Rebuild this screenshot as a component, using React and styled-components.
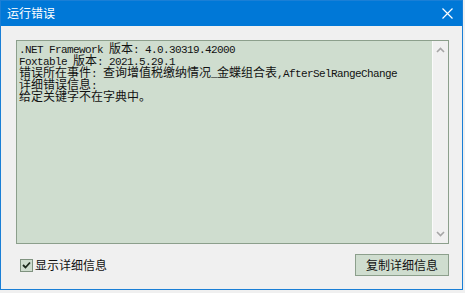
import React from 'react'
import styled, { createGlobalStyle } from 'styled-components'

const GlobalStyle = createGlobalStyle`
  html, body {
    margin: 0;
    padding: 0;
    background: #f0f0f0;
  }
  * {
    box-sizing: border-box;
  }
`

const Window = styled.div`
  width: 463px;
  height: 290px;
  border: 1px solid #1a7fd6;
  background: #f0f0f0;
  display: flex;
  flex-direction: column;
  font-family: "Noto Sans CJK SC", "Liberation Sans", sans-serif;
  font-size: 12px;
  color: #111;
`

const TitleBar = styled.div`
  height: 25px;
  background: #0078d7;
  color: #fff;
  display: flex;
  align-items: center;
  padding: 0 9px 1px 6px;
  font-size: 12px;
  line-height: 12px;
`

const Close = styled.svg`
  margin-left: auto;
  width: 11px;
  height: 11px;
`

const Body = styled.div`
  flex: 1;
  display: flex;
  flex-direction: column;
  padding: 14px 13px 0 15px;
`

const TextBox = styled.div`
  height: 204px;
  border: 1px solid #8c9f8c;
  background: #cfddcf;
  display: flex;
`

const Lines = styled.div`
  flex: 1;
  padding: 1px 2px;
  line-height: 12px;
  white-space: pre;
  font-size: 12px;
  color: #121212;
`

const Line = styled.div`
  height: 12px;
  line-height: 12px;
`

const Ascii = styled.span`
  font-family: "Liberation Mono", monospace;
  font-size: 11px;
  line-height: 12px;
  letter-spacing: -0.6px;
`

const ScrollBar = styled.div`
  width: 16px;
  background: #f0f0f0;
  border-left: 1px solid #fafafa;
  display: flex;
  flex-direction: column;
  justify-content: space-between;
  align-items: center;
  padding: 6px 0 6px;
`

const Arrow = styled.svg`
  width: 9px;
  height: 6px;
  transform: ${p => (p.$down ? 'rotate(180deg)' : 'none')};
`

const Footer = styled.div`
  margin-top: 10px;
  height: 22px;
  display: flex;
  align-items: center;
  justify-content: space-between;
`

const CheckLabel = styled.label`
  display: flex;
  align-items: center;
  gap: 2px;
  padding-left: 4px;
  line-height: 12px;
  font-size: 12px;
`

const CheckBox = styled.span`
  width: 13px;
  height: 13px;
  border: 1px solid #7f927f;
  background: #cfddcf;
  display: flex;
  align-items: center;
  justify-content: center;
`

const Button = styled.button`
  width: 94px;
  height: 22px;
  border: 1px solid #8c9f8c;
  background: #cfddcf;
  font-family: inherit;
  font-size: 12px;
  color: #111;
  padding: 0;
  line-height: 12px;
`

const lines = [
  '.NET Framework 版本: 4.0.30319.42000',
  'Foxtable 版本: 2021.5.29.1',
  '错误所在事件: 查询增值税缴纳情况_金蝶组合表,AfterSelRangeChange',
  '详细错误信息:',
  '给定关键字不在字典中。',
]

function renderLine(text) {
  return text.split(/([\x00-\x7f]+)/).map((part, i) =>
    i % 2 === 1 ? <Ascii key={i}>{part}</Ascii> : part
  )
}

function App() {
  return (
    <>
      <GlobalStyle />
      <Window>
        <TitleBar>
          运行错误
          <Close viewBox="0 0 11 11">
            <path d="M0.5 0.5 L10.5 10.5 M10.5 0.5 L0.5 10.5" stroke="#fff" strokeWidth="1.2" fill="none" />
          </Close>
        </TitleBar>
        <Body>
          <TextBox>
            <Lines>
              {lines.map(l => (
                <Line key={l}>{renderLine(l)}</Line>
              ))}
            </Lines>
            <ScrollBar>
              <Arrow viewBox="0 0 9 6">
                <path d="M1 5 L4.5 1.5 L8 5" stroke="#a6a6a6" strokeWidth="1.6" fill="none" />
              </Arrow>
              <Arrow viewBox="0 0 9 6" $down>
                <path d="M1 5 L4.5 1.5 L8 5" stroke="#a6a6a6" strokeWidth="1.6" fill="none" />
              </Arrow>
            </ScrollBar>
          </TextBox>
          <Footer>
            <CheckLabel>
              <CheckBox>
                <svg width="9" height="8" viewBox="0 0 9 8">
                  <path d="M1 4 L3.5 6.5 L8 1.5" stroke="#1c2a1c" strokeWidth="1.8" fill="none" />
                </svg>
              </CheckBox>
              显示详细信息
            </CheckLabel>
            <Button>复制详细信息</Button>
          </Footer>
        </Body>
      </Window>
    </>
  )
}

export default App
